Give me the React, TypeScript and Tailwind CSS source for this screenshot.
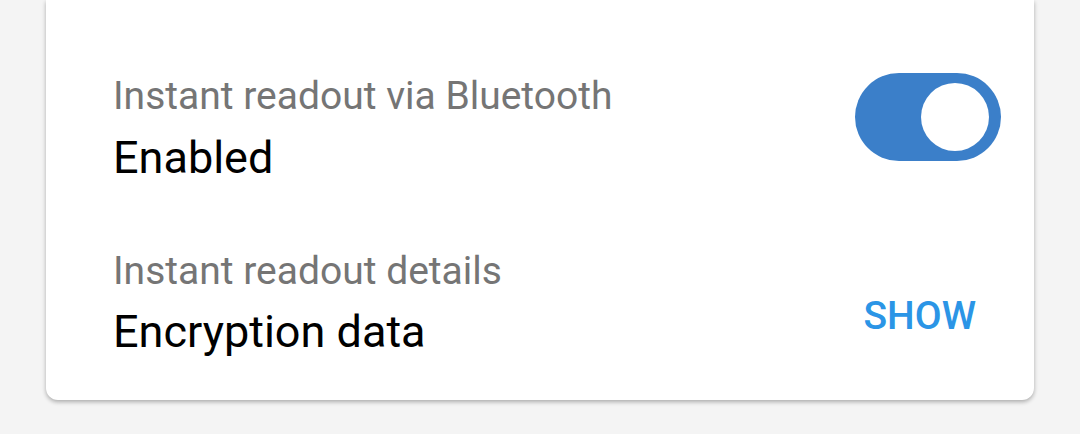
import React from "react";

export default function App() {
  return (
    <div className="w-[1080px] h-[434px] bg-[#f4f4f4] overflow-hidden" style={{ fontFamily: "Roboto, 'Liberation Sans', sans-serif" }}>
      <div className="ml-[46px] w-[988px] h-[400px] bg-white rounded-b-[12px] shadow-[0_2px_4px_rgba(0,0,0,0.3)] pl-[67px] pr-[33px] pt-[72px]">
        <div className="flex items-start justify-between">
          <div className="flex flex-col">
            <div className="text-[39px] leading-[48px] text-[#757575]">Instant readout via Bluetooth</div>
            <div className="text-[45px] leading-[56px] mt-[10px] text-black">Enabled</div>
          </div>
          <div className="mt-[1px] w-[146px] h-[88px] rounded-full bg-[#3b7fc9] flex items-center justify-end pr-[12px]">
            <div className="w-[68px] h-[68px] rounded-full bg-white" />
          </div>
        </div>
        <div className="flex items-start justify-between mt-[61px]">
          <div className="flex flex-col">
            <div className="text-[39px] leading-[48px] text-[#757575]">Instant readout details</div>
            <div className="text-[45px] leading-[56px] mt-[9px] text-black">Encryption data</div>
          </div>
          <div className="text-[39px] leading-[48px] font-medium text-[#2b95e6] pr-[25px] mt-[45px]">SHOW</div>
        </div>
      </div>
    </div>
  );
}
